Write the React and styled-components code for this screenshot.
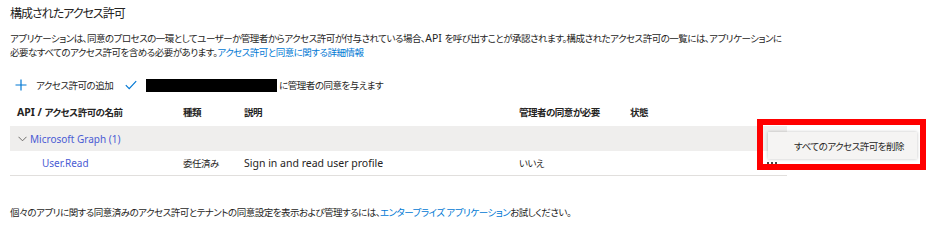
import styled, { createGlobalStyle } from "styled-components";

const GlobalStyle = createGlobalStyle`
  body {
    margin: 0;
    background: #ffffff;
    color: #252423;
    font-family: "Noto Sans", "Noto Sans CJK JP", sans-serif;
    font-feature-settings: "palt";
  }
`;

const Page = styled.div`
  width: 939px;
  height: 240px;
  padding: 4px 10px 0;
  box-sizing: border-box;
  overflow: hidden;
  font-size: 9.5px;
  letter-spacing: -0.5px;
`;

// latin runs keep their natural spacing and a bigger size
const Latin = styled.span`
  font-size: ${(p) => p.$size || 10.5}px;
  letter-spacing: 0;
`;

const Title = styled.h2`
  margin: 0;
  font-size: 12px;
  font-weight: 400;
  line-height: 20px;
  letter-spacing: -1px;
`;

const Description = styled.p`
  margin: 7px 0 0;
  line-height: 14px;
`;

const Link = styled.a`
  color: #0078d4;
  text-decoration: none;
`;

const Toolbar = styled.div`
  display: flex;
  align-items: center;
  height: 22px;
  margin-top: 14px;
  padding-left: 5px;
`;

const ToolButton = styled.span`
  display: flex;
  align-items: center;
  gap: ${(p) => p.$inner || 8}px;
  margin-right: ${(p) => p.$gap || 0}px;
`;

const Redacted = styled.span`
  display: inline-block;
  width: 131px;
  height: 13px;
  background: #000;
  margin-right: 2px;
`;

const TableWrap = styled.div`
  position: relative;
  width: 777px;
  margin-top: 1px;
`;

const Row = styled.div`
  display: grid;
  grid-template-columns: 166px 61px 275px 111px 1fr;
  align-items: center;
  height: ${(p) => p.$h}px;
  padding-left: ${(p) => p.$indent || 7}px;
  background: ${(p) => (p.$shade ? "#efeeed" : "transparent")};
  border-bottom: ${(p) => (p.$line ? "1px solid #e1dfdd" : "none")};
`;

const HeadCell = styled.span`
  font-weight: 700;
  white-space: nowrap;
`;

const Cell = styled.span`
  color: ${(p) => p.$color || "inherit"};
  padding-left: ${(p) => p.$pad || 0}px;
  white-space: nowrap;
`;

const Group = styled.span`
  display: flex;
  align-items: center;
  gap: 3px;
  color: #4a5bd4;
  grid-column: 1 / 3;
`;

const Footer = styled.p`
  margin: 30px 0 0;
  line-height: 14px;
`;

const Highlight = styled.div`
  position: absolute;
  left: 747px;
  top: 22px;
  width: 157px;
  height: 39px;
  border: 6px solid #ff0000;
`;

const MenuItem = styled.div`
  position: absolute;
  left: 5px;
  top: 7px;
  width: 149px;
  height: 27px;
  box-sizing: border-box;
  display: flex;
  align-items: center;
  justify-content: flex-end;
  padding-right: 13px;
  background: #f5f4f3;
  box-shadow: 0 0 3px rgba(0, 0, 0, 0.25);
`;

const More = styled.span`
  position: absolute;
  left: 4px;
  top: 37px;
  display: flex;
  gap: 2px;
`;

const Dot = styled.i`
  width: 2px;
  height: 2px;
  background: #484644;
`;

const Plus = () => (
  <svg width="12" height="12" viewBox="0 0 12 12">
    <path d="M6 0.5v11M0.5 6h11" stroke="#0078d4" strokeWidth="1.2" fill="none" />
  </svg>
);

const Check = () => (
  <svg width="12" height="10" viewBox="0 0 12 10">
    <path d="M0.8 5.2l3.4 3.4L11.2 1.2" stroke="#0078d4" strokeWidth="1.2" fill="none" />
  </svg>
);

const Chevron = () => (
  <svg width="9" height="6" viewBox="0 0 9 6">
    <path d="M0.5 0.8l4 4 4-4" stroke="#605e5c" strokeWidth="0.9" fill="none" />
  </svg>
);

export default function App() {
  return (
    <>
      <GlobalStyle />
      <Page>
        <Title>構成されたアクセス許可</Title>
        <Description>
          アプリケーションは、同意のプロセスの一環としてユーザーか管理者からアクセス許可が付与されている場合、
          <Latin>API </Latin>
          を呼び出すことが承認されます。構成されたアクセス許可の一覧には、アプリケーションに
          <br />
          必要なすべてのアクセス許可を含める必要があります。
          <Link href="#">アクセス許可と同意に関する詳細情報</Link>
        </Description>
        <Toolbar>
          <ToolButton $gap={12} $inner={9}>
            <Plus />
            アクセス許可の追加
          </ToolButton>
          <ToolButton $inner={9}>
            <Check />
            <Redacted />
          </ToolButton>
          <span>に管理者の同意を与えます</span>
        </Toolbar>
        <TableWrap>
          <Row $h={29}>
            <HeadCell>
              <Latin>API / </Latin>アクセス許可の名前
            </HeadCell>
            <HeadCell>種類</HeadCell>
            <HeadCell>説明</HeadCell>
            <HeadCell>管理者の同意が必要</HeadCell>
            <HeadCell>状態</HeadCell>
          </Row>
          <Row $h={25} $shade $indent={8}>
            <Group>
              <Chevron />
              <Latin $size={10}>Microsoft Graph (1)</Latin>
            </Group>
          </Row>
          <Row $h={24} $line>
            <Cell $color="#4a5bd4" $pad={25}>
              <Latin $size={10}>User.Read</Latin>
            </Cell>
            <Cell>委任済み</Cell>
            <Cell>
              <Latin>Sign in and read user profile</Latin>
            </Cell>
            <Cell>いいえ</Cell>
            <Cell />
          </Row>
          <Highlight>
            <MenuItem>すべてのアクセス許可を削除</MenuItem>
            <More>
              <Dot />
              <Dot />
              <Dot />
            </More>
          </Highlight>
        </TableWrap>
        <Footer>
          個々のアプリに関する同意済みのアクセス許可とテナントの同意設定を表示および管理するには、
          <Link href="#">エンタープライズ アプリケーション</Link>お試しください。
        </Footer>
      </Page>
    </>
  );
}
